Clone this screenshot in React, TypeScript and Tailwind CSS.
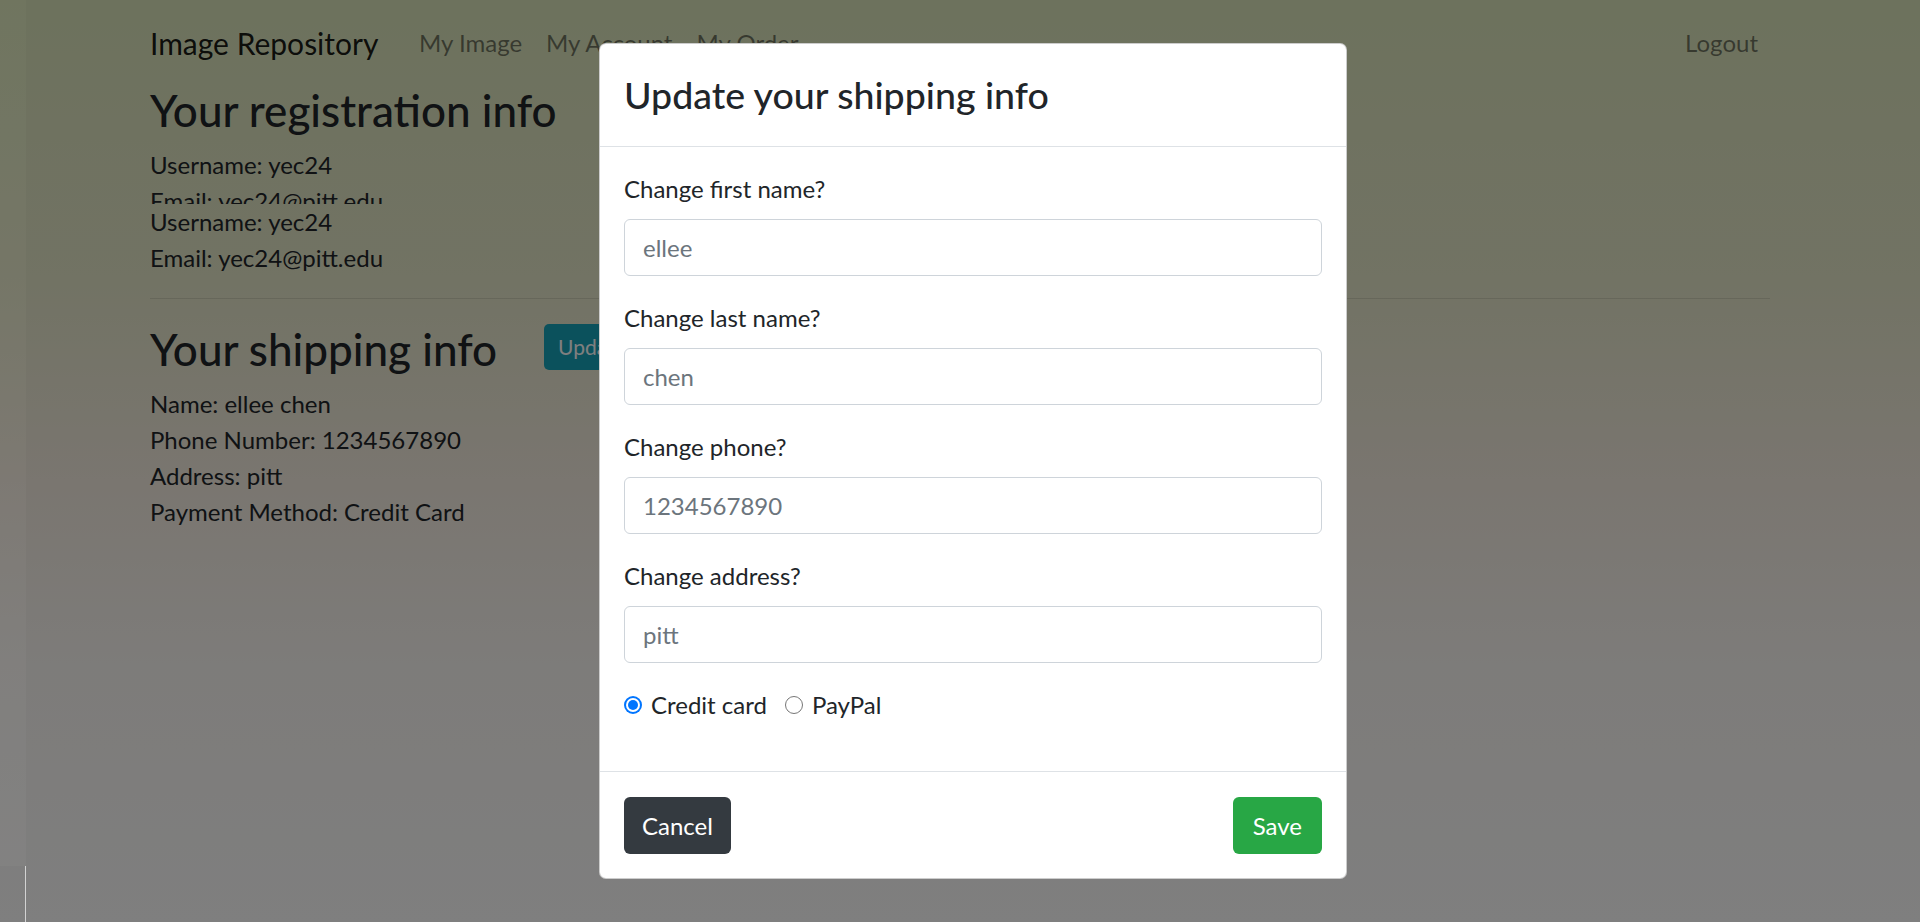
import React from 'react';

// ============================================================================
// Account page with the "Update your shipping info" modal open
// ============================================================================

const navLinks = ['My Image', 'My Account', 'My Order'];

const registration = ['Username: yec24', 'Email: yec24@pitt.edu'];

const shipping = [
  'Name: ellee chen',
  'Phone Number: 1234567890',
  'Address: pitt',
  'Payment Method: Credit Card',
];

const fields = [
  { label: 'Change first name?', value: 'ellee' },
  { label: 'Change last name?', value: 'chen' },
  { label: 'Change phone?', value: '1234567890' },
  { label: 'Change address?', value: 'pitt' },
];

// Form group with label + input
const Field: React.FC<{ label: string; value: string }> = ({ label, value }) => (
  <div className="mb-[24px]">
    <label className="block mb-[12px] text-[24px] leading-[36px]">{label}</label>
    <input
      readOnly
      placeholder={value}
      className="block w-full h-[57px] px-[18px] border border-[#ced4da] rounded-[6px] text-[24px] leading-[36px] bg-white outline-none placeholder:text-[#6c757d]"
    />
  </div>
);

// Radio option (drawn, matches Chrome native look)
const Radio: React.FC<{ label: string; checked?: boolean }> = ({ label, checked }) => (
  <div className="flex items-center mr-[18px]">
    {checked ? (
      <span className="w-[18px] h-[18px] rounded-full bg-[#0075ff] flex items-center justify-center mr-[9px]">
        <span className="w-[14px] h-[14px] rounded-full bg-white flex items-center justify-center">
          <span className="w-[10px] h-[10px] rounded-full bg-[#0075ff]" />
        </span>
      </span>
    ) : (
      <span className="w-[18px] h-[18px] rounded-full border border-[#767676] bg-white mr-[9px]" />
    )}
    <span className="text-[24px] leading-[36px]">{label}</span>
  </div>
);

export default function App() {
  return (
    <div className="relative flex h-[922px] w-full overflow-hidden font-['Lato',sans-serif] text-[#212529] bg-[linear-gradient(180deg,#dae4ba_0%,#e4e6c8_30%,#f4ece0_52%,#fbf8f4_72%,#fefefe_100%)]">
      {/* left edge strip */}
      <div className="w-[26px] shrink-0 flex flex-col">
        <div className="h-[866px] bg-black/[0.485]" />
        <div className="flex-1 bg-black/50 border-r border-[#d2d2d2]" />
      </div>

      <div className="relative flex-1">
        {/* page behind the modal */}
        <div className="pl-[124px] pr-[150px]">
          <nav className="flex items-center py-[12px]">
            <span className="w-[257px] pt-[2px] text-[30px] leading-[40px] text-black/90">Image Repository</span>
            {navLinks.map((l) => (
              <span key={l} className="px-[12px] pt-[13px] pb-[11px] text-[24px] leading-[36px] text-black/50">
                {l}
              </span>
            ))}
            <span className="ml-auto px-[12px] pt-[13px] pb-[11px] text-[24px] leading-[36px] text-black/50">Logout</span>
          </nav>

          <h2 className="text-[44px] leading-[52px] font-medium mb-[11px]">Your registration info</h2>
          <div className="h-[57px] overflow-hidden">
            {registration.map((t) => (
              <div key={t} className="text-[24px] leading-[36px]">{t}</div>
            ))}
          </div>
          <div>
            {registration.map((t) => (
              <div key={t} className="text-[24px] leading-[36px]">{t}</div>
            ))}
          </div>
          <div className="h-px bg-black/10 mt-[22px] mb-[24px]" />

          <div className="flex items-start mb-[11px]">
            <h2 className="text-[44px] leading-[52px] font-medium">Your shipping info</h2>
            <button className="ml-[47px] mt-px h-[46px] px-[14px] rounded-[5px] bg-[#17a2b8] text-white text-[21px]">
              Update
            </button>
          </div>
          {shipping.map((t) => (
            <div key={t} className="text-[24px] leading-[36px]">{t}</div>
          ))}
        </div>

        {/* backdrop */}
        <div className="absolute inset-0 bg-black/50" />

        {/* modal */}
        <div className="absolute inset-0 flex justify-center items-start pt-[43px]">
          <div className="w-[748px] bg-white border border-black/20 rounded-[7px]">
            <div className="p-[24px] border-b border-[#dee2e6]">
              <h4 className="text-[37.5px] leading-[54px] font-medium">Update your shipping info</h4>
            </div>
            <div className="p-[24px]">
              {fields.map((f) => (
                <Field key={f.label} label={f.label} value={f.value} />
              ))}
              <div className="flex items-center h-[36px] mb-[24px]">
                <Radio label="Credit card" checked />
                <Radio label="PayPal" />
              </div>
            </div>
            <div className="flex justify-between px-[24px] pt-[25px] pb-[24px] border-t border-[#dee2e6]">
              <button className="h-[57px] px-[18px] rounded-[6px] bg-[#343a40] text-white text-[24px]">Cancel</button>
              <button className="h-[57px] px-[20px] rounded-[6px] bg-[#28a745] text-white text-[24px]">Save</button>
            </div>
          </div>
        </div>
      </div>
    </div>
  );
}
